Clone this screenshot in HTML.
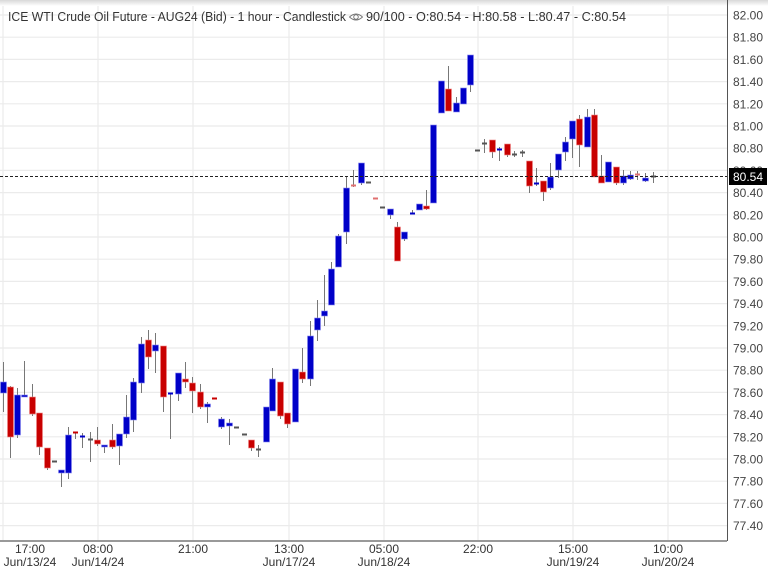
<!DOCTYPE html>
<html><head><meta charset="utf-8"><style>
html,body{margin:0;padding:0;background:#fff;width:768px;height:568px;overflow:hidden;font-family:"Liberation Sans",sans-serif;}
#c{position:absolute;left:0;top:0;}
</style></head><body>
<svg id="c" width="768" height="568" xmlns="http://www.w3.org/2000/svg"></svg>
<script>
var s='';
var svg=document.getElementById('c');
s+='<defs><linearGradient id="sh" x1="0" y1="0" x2="0" y2="1"><stop offset="0" stop-color="#d8d8d8"/><stop offset="1" stop-color="#fff"/></linearGradient><clipPath id="pc"><rect x="0" y="0" width="727" height="541"/></clipPath><clipPath id="ac"><rect x="728" y="0" width="40" height="544"/></clipPath></defs>';
for(var k=0;k<=24;k++){var y=15+k*22.2;if(y<541)s+='<line x1="0" x2="727" y1="'+y.toFixed(1)+'" y2="'+y.toFixed(1)+'" stroke="#ebebeb" stroke-width="1.2"/>';}
var vx=[3,98,193,289,384,478,573,668];
vx.forEach(function(x){s+='<line x1="'+x+'" x2="'+x+'" y1="0" y2="541" stroke="#ebebeb" stroke-width="1.2"/>';});
s+='<rect x="0" y="0" width="768" height="6" fill="url(#sh)"/>';
var d=[[3,382,393,362,412,'b'],[10,387,437,386,458,'r'],[17,395,435,388,438,'b'],[24,395,397,361,397,'b'],[32,397,414,384,416,'r'],[39,413,447,413,455,'r'],[47,448,468,448,470,'r'],[54,461,461,461,461,'g'],[61,470,473,470,487,'b'],[68,435,473,427,479,'b'],[75,432,433,432,439,'r'],[82,436,437,433,448,'b'],[90,439,439,432,462,'g'],[97,440,444,427,446,'r'],[104,445,447,445,453,'b'],[112,440,447,424,449,'r'],[119,434,446,434,465,'b'],[126,417,434,395,438,'b'],[133,382,420,378,432,'b'],[141,344,383,337,393,'b'],[148,340,357,330,369,'r'],[155,345,351,333,373,'b'],[163,346,397,346,412,'r'],[170,393,394,393,439,'b'],[178,373,394,373,401,'b'],[185,379,382,362,388,'r'],[192,383,391,377,413,'r'],[200,392,407,384,409,'r'],[207,404,407,402,423,'b'],[214,398,399,398,399,'r'],[221,419,427,417,429,'b'],[229,423,426,419,445,'b'],[236,427,427,427,427,'g'],[244,434,434,434,434,'g'],[251,440,448,440,451,'r'],[258,449,449,445,457,'g'],[266,407,442,407,442,'b'],[272,379,411,368,411,'b'],[280,382,416,382,419,'r'],[287,413,424,413,428,'r'],[295,369,422,369,422,'b'],[302,372,379,348,383,'r'],[310,336,379,321,386,'b'],[317,318,330,300,341,'b'],[324,311,316,275,326,'b'],[331,269,305,262,305,'b'],[338,236,267,234,267,'b'],[346,188,232,176,244,'b'],[353,185,186,170,187,'p'],[361,163,183,163,185,'b'],[368,182,182,182,182,'g'],[375,198,198,198,198,'p'],[382,207,207,207,207,'g'],[390,209,215,209,219,'b'],[397,227,261,222,261,'r'],[404,232,239,232,241,'b'],[412,213,213,210,213,'b'],[419,204,210,204,210,'b'],[426,206,209,190,210,'r'],[433,125,203,125,203,'b'],[441,81,113,81,113,'b'],[448,89,111,66,111,'r'],[456,103,112,97,112,'b'],[463,88,104,88,104,'b'],[470,55,85,55,92,'b'],[477,150,150,150,150,'g'],[484,143,143,139,153,'g'],[492,140,152,140,158,'r'],[499,149,149,147,161,'b'],[507,144,155,144,157,'r'],[514,154,154,151,157,'g'],[522,152,152,150,157,'g'],[529,161,186,161,193,'r'],[536,183,184,168,186,'b'],[543,181,192,181,201,'r'],[550,177,188,163,190,'b'],[558,154,170,154,178,'b'],[565,142,152,137,161,'b'],[572,121,139,121,158,'b'],[579,119,145,115,167,'r'],[587,117,147,109,147,'b'],[594,115,177,109,177,'r'],[601,176,183,155,183,'r'],[608,162,182,162,182,'b'],[616,167,183,167,185,'r'],[623,176,183,170,185,'b'],[630,175,179,171,180,'b'],[637,174,174,171,180,'p'],[645,178,181,173,182,'b'],[653,176,176,172,183,'g']];
var col={b:'#0000c8',r:'#c80000',g:'#555',p:'#e07070'};
s+='<g clip-path="url(#pc)">';
d.forEach(function(c){
 var x=c[0]+0.5;
 if(c[4]>c[3])s+='<line x1="'+x+'" x2="'+x+'" y1="'+c[3]+'" y2="'+c[4]+'" stroke="#777" stroke-width="1"/>';
 var h=c[2]-c[1];
 if(h<2){s+='<rect x="'+(c[0]-2)+'" y="'+(c[1]-0.5)+'" width="5" height="2" fill="'+col[c[5]]+'"/>';}
 else s+='<rect x="'+(c[0]-2.5)+'" y="'+c[1]+'" width="6" height="'+h+'" fill="'+col[c[5]]+'" stroke="'+(c[5]=='b'?'#8888ee':'#ee8888')+'" stroke-width="0.6"/>';
});
s+='</g>';
s+='<line x1="0" x2="727" y1="176.5" y2="176.5" stroke="#222" stroke-width="1" stroke-dasharray="3,2"/>';
s+='<line x1="727.5" x2="727.5" y1="0" y2="541" stroke="#555" stroke-width="1"/>';
s+='<line x1="0" x2="727" y1="541" y2="541" stroke="#999" stroke-width="2"/>';
s+='<g clip-path="url(#ac)" font-size="12" fill="#444">';
for(var k=-1;k<=24;k++){var y=15+k*22.2;var v=(82-k*0.2).toFixed(2);s+='<text x="733" y="'+(y+4.5).toFixed(1)+'">'+v+'</text>';}
s+='</g>';
s+='<rect x="729" y="168" width="38" height="17" fill="#000"/><text x="733" y="181" font-size="12" fill="#fff">80.54</text>';
var tl=[[30,'17:00','Jun/13/24'],[98,'08:00','Jun/14/24'],[193,'21:00',''],[289,'13:00','Jun/17/24'],[384,'05:00','Jun/18/24'],[478,'22:00',''],[573,'15:00','Jun/19/24'],[668,'10:00','Jun/20/24']];
tl.forEach(function(t){s+='<text x="'+t[0]+'" y="553" font-size="12" fill="#333" text-anchor="middle">'+t[1]+'</text>';if(t[2])s+='<text x="'+t[0]+'" y="566" font-size="12" fill="#333" text-anchor="middle">'+t[2]+'</text>';});
s+='<text x="8" y="21" font-size="13" fill="#333" textLength="338" lengthAdjust="spacingAndGlyphs">ICE WTI Crude Oil Future - AUG24 (Bid) - 1 hour - Candlestick</text>';
s+='<g transform="translate(356,17)" fill="none" stroke="#777" stroke-width="0.9"><path d="M-6.5,0 Q0,-6 6.5,0 Q0,6 -6.5,0Z"/><circle r="2.3"/></g>';
s+='<text x="366" y="21" font-size="13" fill="#333" textLength="260" lengthAdjust="spacingAndGlyphs">90/100 - O:80.54 - H:80.58 - L:80.47 - C:80.54</text>';
svg.innerHTML=s;
</script>
</body></html>
